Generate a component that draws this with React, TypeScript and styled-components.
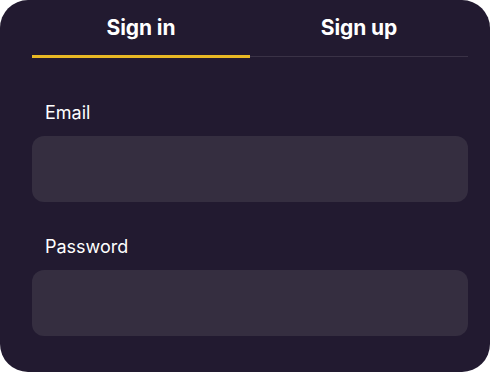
import styled, { createGlobalStyle } from 'styled-components';

const GlobalStyle = createGlobalStyle`
  html, body {
    margin: 0;
    padding: 0;
    background: #ffffff;
  }
  * {
    box-sizing: border-box;
  }
`;

const Card = styled.div`
  width: 490px;
  height: 372px;
  background-color: #221a30;
  border-radius: 28px;
  padding: 0 22px 0 32px;
  font-family: Inter, "Noto Sans", sans-serif;
  color: #ffffff;
  display: flex;
  flex-direction: column;
`;

const Tabs = styled.div`
  display: flex;
  height: 58px;
  position: relative;
  &::after {
    content: '';
    position: absolute;
    left: 0;
    right: 0;
    bottom: 1.5px;
    height: 1px;
    background: #3a3246;
  }
`;

const Tab = styled.button<{ $active?: boolean }>`
  flex: 1;
  background: none;
  border: none;
  padding: 0;
  color: #ffffff;
  font-family: inherit;
  font-size: 21px;
  font-weight: 700;
  letter-spacing: -0.1px;
  position: relative;
  z-index: 1;
  border-bottom: 3px solid ${({ $active }) => ($active ? '#e8b824' : 'transparent')};
  cursor: pointer;
`;

const Form = styled.div`
  display: flex;
  flex-direction: column;
  padding-top: 44px;
  gap: 34px;
`;

const Field = styled.label`
  display: flex;
  flex-direction: column;
  gap: 12px;
`;

const Label = styled.span`
  font-size: 18px;
  font-weight: 400;
  padding-left: 13px;
  line-height: 22px;
`;

const Input = styled.input`
  height: 66px;
  border: none;
  border-radius: 12px;
  background-color: #352e40;
  color: #ffffff;
  font-family: inherit;
  font-size: 16px;
  padding: 0 16px;
  outline: none;
`;

export default function App() {
  return (
    <>
      <GlobalStyle />
      <Card>
        <Tabs>
          <Tab $active>Sign in</Tab>
          <Tab>Sign up</Tab>
        </Tabs>
        <Form>
          <Field>
            <Label>Email</Label>
            <Input type="email" />
          </Field>
          <Field>
            <Label>Password</Label>
            <Input type="password" />
          </Field>
        </Form>
      </Card>
    </>
  );
}
